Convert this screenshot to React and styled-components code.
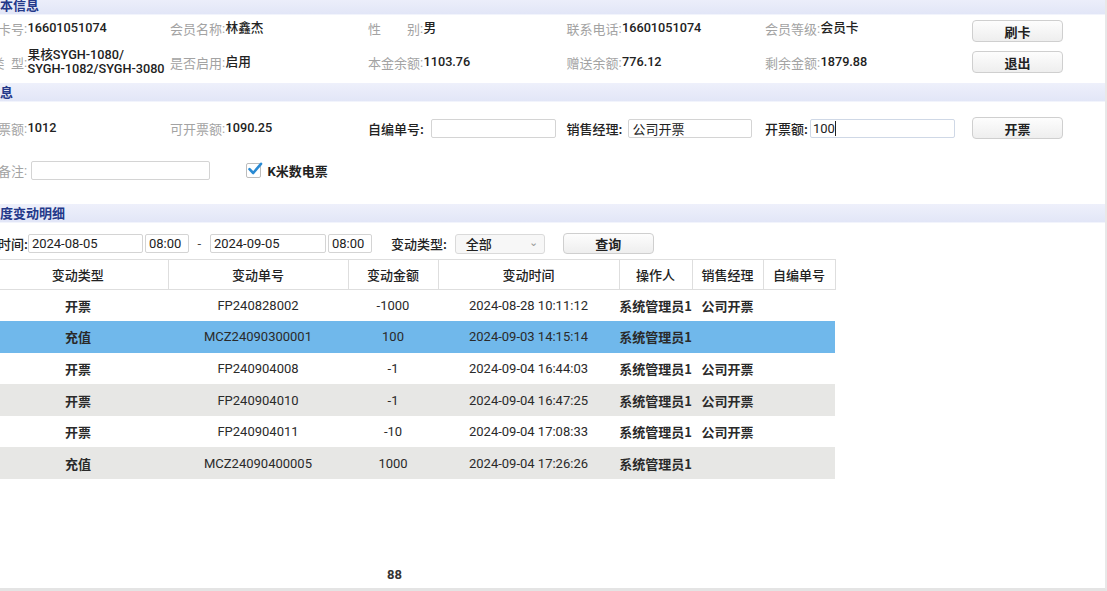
import React from 'react'
import styled, { createGlobalStyle } from 'styled-components'

const GlobalStyle = createGlobalStyle`
  html, body {
    margin: 0;
    padding: 0;
    background: #ffffff;
  }
  body {
    font-family: Roboto, 'Noto Sans CJK SC', sans-serif;
    font-size: 13px;
    color: #222;
  }
`

const memberRows = [
  [
    { label: '会员卡号', value: ['16601051074'] },
    { label: '会员名称', value: ['林鑫杰'] },
    { label: '性别', value: ['男'] },
    { label: '联系电话', value: ['16601051074'] },
    { label: '会员等级', value: ['会员卡'] },
  ],
  [
    { label: '卡类型', value: ['果核SYGH-1080/', 'SYGH-1082/SYGH-3080'] },
    { label: '是否启用', value: ['启用'] },
    { label: '本金余额', value: ['1103.76'] },
    { label: '赠送余额', value: ['776.12'] },
    { label: '剩余金额', value: ['1879.88'] },
  ],
]

const records = [
  { type: '开票', no: 'FP240828002', amount: '-1000', time: '2024-08-28 10:11:12', op: '系统管理员1', mgr: '公司开票' },
  { type: '充值', no: 'MCZ24090300001', amount: '100', time: '2024-09-03 14:15:14', op: '系统管理员1', mgr: '', selected: true },
  { type: '开票', no: 'FP240904008', amount: '-1', time: '2024-09-04 16:44:03', op: '系统管理员1', mgr: '公司开票' },
  { type: '开票', no: 'FP240904010', amount: '-1', time: '2024-09-04 16:47:25', op: '系统管理员1', mgr: '公司开票' },
  { type: '开票', no: 'FP240904011', amount: '-10', time: '2024-09-04 17:08:33', op: '系统管理员1', mgr: '公司开票' },
  { type: '充值', no: 'MCZ24090400005', amount: '1000', time: '2024-09-04 17:26:26', op: '系统管理员1', mgr: '' },
]

const columns = [
  { title: '变动类型', width: 180 },
  { title: '变动单号', width: 180 },
  { title: '变动金额', width: 90 },
  { title: '变动时间', width: 181 },
  { title: '操作人', width: 73 },
  { title: '销售经理', width: 71 },
  { title: '自编单号', width: 72 },
]

function App() {
  return (
    <>
      <GlobalStyle />
      <Viewport>
        <Canvas>
          <SectionBar>会员基本信息</SectionBar>
          <MemberSection>
            {memberRows.map((row, i) => (
              <InfoGrid key={i}>
                {row.map((f) => (
                  <Field key={f.label} $lift={i === 0 ? 6 : 0}>
                    <Label>{f.label}</Label>
                    <Colon>:</Colon>
                    <Value>
                      {f.value.map((line) => (
                        <ValueLine key={line}>{line}</ValueLine>
                      ))}
                    </Value>
                  </Field>
                ))}
                <Button>{i === 0 ? '刷卡' : '退出'}</Button>
              </InfoGrid>
            ))}
          </MemberSection>

          <SectionBar>开票信息</SectionBar>
          <InvoiceSection>
            <InfoGrid>
              <Field>
                <Label>已开票额</Label>
                <Colon>:</Colon>
                <Value>1012</Value>
              </Field>
              <Field>
                <Label>可开票额</Label>
                <Colon>:</Colon>
                <Value>1090.25</Value>
              </Field>
              <Field>
                <DarkLabel $mr={7}>自编单号:</DarkLabel>
                <TextBox $w={125} readOnly value="" />
              </Field>
              <Field>
                <DarkLabel $mr={6}>销售经理:</DarkLabel>
                <TextBox $w={124} readOnly value="公司开票" />
              </Field>
              <Field>
                <DarkLabel $mr={2}>开票额:</DarkLabel>
                <InputShell $w={145}>
                  100<Caret />
                </InputShell>
              </Field>
              <Button>开票</Button>
            </InfoGrid>
            <NoteRow>
              <Label>开票备注</Label>
              <Colon>:</Colon>
              <TextBox $w={179} readOnly value="" />
              <CheckWrap>
                <CheckBox>
                  <svg width="16" height="16" viewBox="0 0 16 16">
                    <path d="M2.5 8.2 L6.2 12 L14 2.8" fill="none" stroke="#2a8ad3" strokeWidth="2.6" strokeLinecap="round" strokeLinejoin="round" />
                  </svg>
                </CheckBox>
                <CheckText>K米数电票</CheckText>
              </CheckWrap>
            </NoteRow>
          </InvoiceSection>

          <SectionBar>会员额度变动明细</SectionBar>
          <FilterRow>
            <DarkLabel $mr={0}>变动时间:</DarkLabel>
            <TextBox $w={115} readOnly value="2024-08-05" />
            <TextBox $w={44} $ml={2} readOnly value="08:00" />
            <Dash>-</Dash>
            <TextBox $w={116} readOnly value="2024-09-05" />
            <TextBox $w={44} $ml={2} readOnly value="08:00" />
            <DarkLabel $ml={19} $mr={8}>变动类型:</DarkLabel>
            <Select>
              <span>全部</span>
              <Chevron>⌄</Chevron>
            </Select>
            <Button $w={91} $ml={18} $h={21}>查询</Button>
          </FilterRow>

          <Table>
            <colgroup>
              {columns.map((c) => (
                <col key={c.title} style={{ width: c.width }} />
              ))}
            </colgroup>
            <thead>
              <tr>
                {columns.map((c) => (
                  <Th key={c.title}>{c.title}</Th>
                ))}
              </tr>
            </thead>
            <tbody>
              {records.map((r, i) => (
                <Tr key={r.no} $selected={r.selected} $stripe={i % 2 === 1}>
                  <Td $cjk>{r.type}</Td>
                  <Td>{r.no}</Td>
                  <Td>{r.amount}</Td>
                  <Td>{r.time}</Td>
                  <Td $cjk>{r.op}</Td>
                  <Td $cjk>{r.mgr}</Td>
                  <Td></Td>
                </Tr>
              ))}
            </tbody>
          </Table>

          <Footer>88</Footer>
        </Canvas>
      </Viewport>
    </>
  )
}

const Viewport = styled.div`
  width: 1107px;
  height: 591px;
  overflow: hidden;
  position: relative;
  box-sizing: border-box;
  border-bottom: 3px solid #e4e4e4;
  border-right: 2px solid #e8e8e8;
`

const Canvas = styled.div`
  margin-left: -40px;
  margin-top: -4px;
  width: 1147px;
  height: 592px;
  display: flex;
  flex-direction: column;
`

const SectionBar = styled.div`
  height: 18px;
  line-height: 18px;
  padding-left: 1px;
  background: linear-gradient(#eef0fb, #e2e6f7);
  border-bottom: 1px solid #f2f4fc;
  color: #24398a;
  font-weight: 700;
  font-size: 13px;
  font-family: 'Noto Sans CJK SC', sans-serif;
`

const MemberSection = styled.div`
  padding: 5px 0 10px 12px;
  display: flex;
  flex-direction: column;
  gap: 9px;
`

const InvoiceSection = styled.div`
  padding: 15px 0 23px 12px;
  display: flex;
  flex-direction: column;
  gap: 20px;
`

const InfoGrid = styled.div`
  display: grid;
  grid-template-columns: 198px 198px 198.5px 198.5px 197px 1fr;
  grid-template-rows: 22px;
  align-items: center;
  height: 22px;
`

const Field = styled.div`
  display: flex;
  align-items: center;
  align-self: unsafe center;
  white-space: nowrap;
  margin-bottom: ${(p) => p.$lift || 0}px;
`

const Label = styled.span`
  display: inline-block;
  width: 52px;
  color: #a3a3a3;
  text-align: justify;
  text-align-last: justify;
  font-family: 'Noto Sans CJK SC', sans-serif;
  font-size: 13px;
`

const Colon = styled.span`
  color: #a3a3a3;
  width: 3px;
  margin-right: 0.5px;
`

const Value = styled.span`
  display: flex;
  flex-direction: column;
  color: #222;
  font-weight: 500;
  font-size: 12.7px;
  line-height: 14px;
  white-space: nowrap;
`

const ValueLine = styled.span`
  display: block;
`

const DarkLabel = styled.span`
  color: #222;
  font-weight: 500;
  font-family: 'Noto Sans CJK SC', sans-serif;
  margin-left: ${(p) => p.$ml || 0}px;
  margin-right: ${(p) => (p.$mr != null ? p.$mr : 3)}px;
  white-space: nowrap;
`

const TextBox = styled.input`
  box-sizing: border-box;
  width: ${(p) => p.$w}px;
  height: 19px;
  margin-left: ${(p) => p.$ml || 0}px;
  padding: 0 3px;
  border: 1px solid #d4d4d4;
  border-radius: 2px;
  background: #fff;
  font-family: Roboto, 'Noto Sans CJK SC', sans-serif;
  font-size: 13px;
  color: #222;
  outline: none;
`

const InputShell = styled.div`
  box-sizing: border-box;
  width: ${(p) => p.$w}px;
  height: 19px;
  display: flex;
  align-items: center;
  padding: 0 2px;
  border: 1px solid #cfd8e6;
  border-radius: 2px;
  background: #fff;
  font-size: 13px;
  color: #222;
`

const Caret = styled.span`
  width: 1px;
  height: 15px;
  background: #222;
`

const Button = styled.button`
  box-sizing: border-box;
  width: ${(p) => p.$w || 91}px;
  height: ${(p) => p.$h || 22}px;
  margin-left: ${(p) => (p.$ml != null ? p.$ml : 10)}px;
  border: 1px solid #cfcfcf;
  border-radius: 4px;
  background: linear-gradient(#fdfdfd, #eeeeee);
  font-family: 'Noto Sans CJK SC', sans-serif;
  font-size: 13px;
  font-weight: 700;
  color: #222;
  padding: 0;
`

const NoteRow = styled.div`
  display: flex;
  align-items: center;
  height: 22px;
  & > input {
    margin-left: 3px;
  }
`

const CheckWrap = styled.div`
  display: flex;
  align-items: center;
  margin-left: 36px;
  gap: 7px;
`

const CheckBox = styled.span`
  position: relative;
  width: 13px;
  height: 13px;
  border: 1px solid #bdbdbd;
  border-radius: 2px;
  background: #fff;
  svg {
    position: absolute;
    left: 0;
    top: -3px;
  }
`

const CheckText = styled.span`
  font-weight: 700;
  color: #222;
  font-family: Roboto, 'Noto Sans CJK SC', sans-serif;
`

const FilterRow = styled.div`
  display: flex;
  align-items: center;
  padding: 10px 0 5px 12px;
  height: 21px;
`

const Dash = styled.span`
  width: 21px;
  text-align: center;
  color: #444;
`

const Select = styled.div`
  box-sizing: border-box;
  width: 90px;
  height: 20px;
  display: flex;
  align-items: center;
  justify-content: space-between;
  padding: 0 6px 0 10px;
  border: 1px solid #dadada;
  border-radius: 3px;
  background: #f7f7f7;
  font-weight: 500;
  font-family: 'Noto Sans CJK SC', sans-serif;
`

const Chevron = styled.span`
  color: #999;
  font-size: 11px;
  line-height: 11px;
  margin-top: -5px;
`

const Table = styled.table`
  margin-left: 28px;
  border-collapse: collapse;
  table-layout: fixed;
  width: 847px;
`

const Th = styled.th`
  height: 29px;
  padding: 0;
  border: 1px solid #dedede;
  border-left: none;
  font-family: 'Noto Sans CJK SC', sans-serif;
  font-weight: 500;
  font-size: 13px;
  color: #222;
  background: #fff;
`

const Tr = styled.tr`
  height: 31.6px;
  background: ${(p) => (p.$selected ? '#70b8eb' : p.$stripe ? '#e7e7e5' : '#ffffff')};
`

const Td = styled.td`
  padding: 0;
  text-align: center;
  white-space: nowrap;
  font-size: 13px;
  color: #2a2a2a;
  font-weight: ${(p) => (p.$cjk ? 600 : 400)};
  font-family: ${(p) => (p.$cjk ? "'Noto Sans CJK SC', sans-serif" : "Roboto, 'Noto Sans CJK SC', sans-serif")};
`

const Footer = styled.div`
  margin-top: auto;
  padding: 0 0 6px 427px;
  font-weight: 700;
  color: #333;
  font-size: 13px;
`

export default App
